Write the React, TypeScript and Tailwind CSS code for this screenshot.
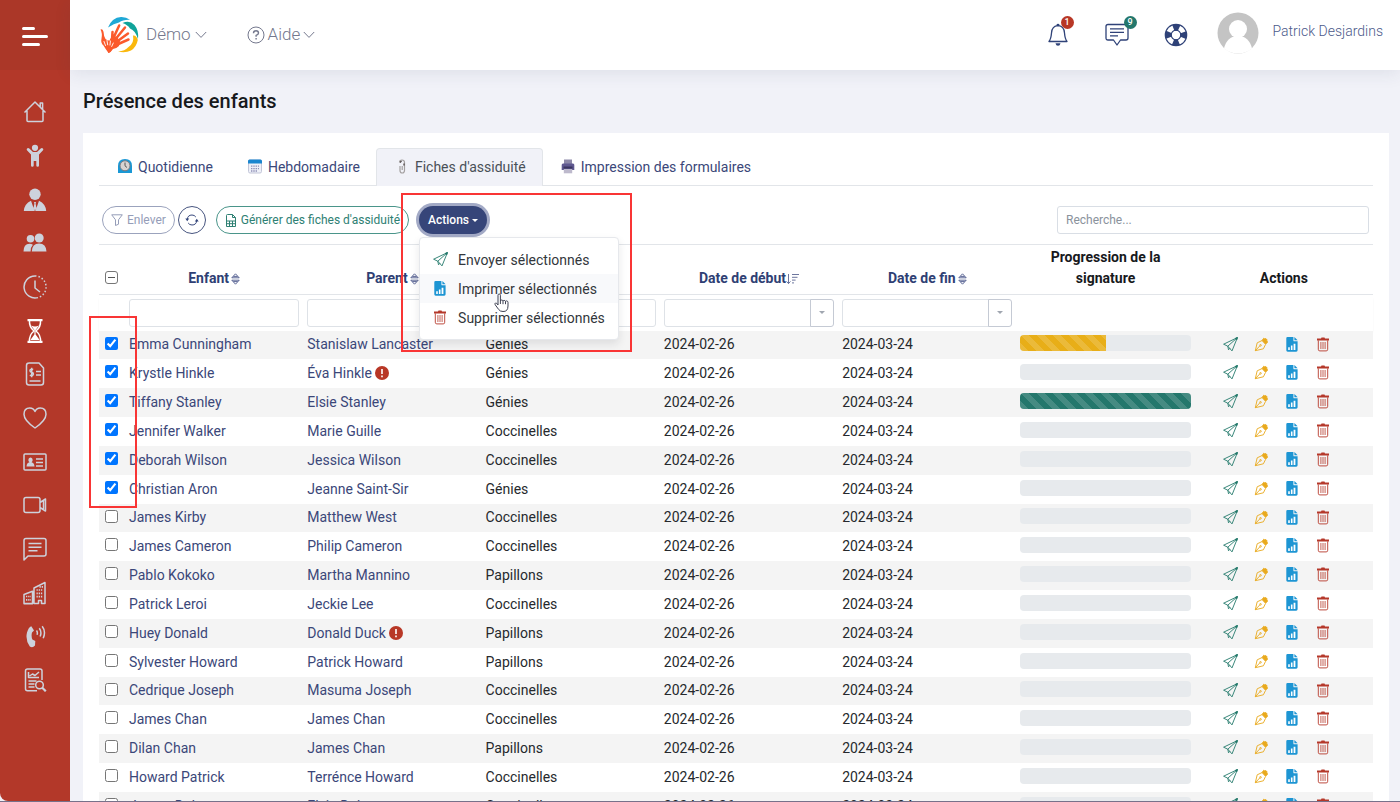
import React, { useState } from "react";

type Row = {
  child: string;
  parent: string;
  alert?: boolean;
  group: string;
  progress: number;
};

const ROWS: Row[] = [
  { child: "Emma Cunningham", parent: "Stanislaw Lancaster", group: "Génies", progress: 50 },
  { child: "Krystle Hinkle", parent: "Éva Hinkle", alert: true, group: "Génies", progress: 0 },
  { child: "Tiffany Stanley", parent: "Elsie Stanley", group: "Génies", progress: 100 },
  { child: "Jennifer Walker", parent: "Marie Guille", group: "Coccinelles", progress: 0 },
  { child: "Deborah Wilson", parent: "Jessica Wilson", group: "Coccinelles", progress: 0 },
  { child: "Christian Aron", parent: "Jeanne Saint-Sir", group: "Génies", progress: 0 },
  { child: "James Kirby", parent: "Matthew West", group: "Coccinelles", progress: 0 },
  { child: "James Cameron", parent: "Philip Cameron", group: "Coccinelles", progress: 0 },
  { child: "Pablo Kokoko", parent: "Martha Mannino", group: "Papillons", progress: 0 },
  { child: "Patrick Leroi", parent: "Jeckie Lee", group: "Coccinelles", progress: 0 },
  { child: "Huey Donald", parent: "Donald Duck", alert: true, group: "Papillons", progress: 0 },
  { child: "Sylvester Howard", parent: "Patrick Howard", group: "Papillons", progress: 0 },
  { child: "Cedrique Joseph", parent: "Masuma Joseph", group: "Coccinelles", progress: 0 },
  { child: "James Chan", parent: "James Chan", group: "Coccinelles", progress: 0 },
  { child: "Dilan Chan", parent: "James Chan", group: "Papillons", progress: 0 },
  { child: "Howard Patrick", parent: "Terrénce Howard", group: "Coccinelles", progress: 0 },
  { child: "James Dube", parent: "Elsie Dube", group: "Coccinelles", progress: 0 },
];

/* ---------- table icons ---------- */

function SendIcon() {
  return (
    <svg viewBox="0 0 15 15" className="h-[15px] w-[15px] text-[#257a6c]" fill="none" stroke="currentColor" strokeWidth="0.9" strokeLinejoin="round">
      <path d="M14.400.6.6 7.200l4.200 2L9 13.900z" />
      <path d="M14.400.6 4.800 9.200l.7 3.600 1.600-1.600" />
      <path d="m12.400 1.200 2-.6-.6 2.200z" fill="currentColor" />
    </svg>
  );
}

function PenIcon() {
  return (
    <svg viewBox="0 0 15 15" className="h-[15px] w-[15px] text-[#e9a91c]" fill="none" stroke="currentColor" strokeWidth="0.9" strokeLinejoin="round">
      <path d="M1.300 13.700 3.200 5.800 8 3.600l3.600 3.700-2.200 4.500z" />
      <path d="m1.300 13.700 4.500-4.800" />
      <circle cx="6.500" cy="8.300" r="0.800" />
      <path d="m8.200 3.200 1.600-2 1.100.900.8-.7 1.600 1.700-.7.700 1.100 1.200-1.900 2z" fill="currentColor" />
    </svg>
  );
}

function ReportIcon() {
  return (
    <svg viewBox="0 0 12 15" className="h-[15px] w-3">
      <path d="M1.500 0H7.400v3.400q0 .900.900.900H11.600v9q0 1.400-1.400 1.400H1.700Q.3 14.700.3 13.300V1.200Q.3 0 1.500 0z" fill="#1d95d3" />
      <path d="M8.400 0 11.600 3.300H8.900q-.5 0-.5-.5z" fill="#1d95d3" />
      <path d="M2.200 12.900v-2.600h1.600v2.600zM4.900 12.900V8.600h1.600v4.300zM7.600 12.900V6.800h1.800v6.100z" fill="#fff" />
    </svg>
  );
}

function TrashIcon() {
  return (
    <svg viewBox="0 0 12 15" className="h-[15px] w-3 text-[#b5382a]" fill="none" stroke="currentColor">
      <path d="M0 1.400h4L4.500.4h3l.5 1h4v2H0z" fill="currentColor" stroke="none" />
      <path d="M1.300 3.400v8.900q0 1.600 1.500 1.600h6.400q1.500 0 1.500-1.600V3.400" strokeWidth="0.9" />
      <path d="M3.900 5v7M6 5v7M8.100 5v7" strokeWidth="0.8" />
    </svg>
  );
}

function SortIcon() {
  return (
    <svg viewBox="0 0 9 12" className="ml-0.5 inline h-3 w-[9px] align-[-2px] text-[#4a568a]" fill="none" stroke="currentColor" strokeWidth="0.9">
      <path d="M4.500.8 8.200 4.800H.8zM4.500 11.200 8.200 7.200H.8zM2.400 3.400h4.200M2.400 8.600h4.200" />
    </svg>
  );
}

function SortedIcon() {
  return (
    <svg viewBox="0 0 13 12" className="inline h-3 w-[13px] align-[-2px] text-[#5c6793]" fill="none" stroke="currentColor">
      <path d="M2.500 1v9.500M.5 8.400l2 2.200 2-2.200M6 1.500h7M6 4.300h5.500M6 7.100h3.600M6 9.900h2" strokeWidth="0.9" />
    </svg>
  );
}

function ChevronIcon() {
  return (
    <svg viewBox="0 0 12 8" className="h-2 w-3" fill="none" stroke="currentColor">
      <path d="M.8 1 6 6.400 11.200 1" />
    </svg>
  );
}

function Caret() {
  return <span className="inline-block border-x-[3px] border-t-[3px] border-x-transparent border-t-current" />;
}

/* ---------- sidebar ---------- */

const MENU: { name: string; active?: boolean; icon: React.ReactNode }[] = [
  {
    name: "Accueil",
    icon: <path d="M1.500 12.500 12 2l10.500 10.500M4 10.800V20.500q0 1 1 1h14q1 0 1-1V10.800M17.200 6.800V3h2.400v6.200" />,
  },
  {
    name: "Enfants",
    icon: (
      <g fill="currentColor" stroke="none">
        <circle cx="12" cy="3.800" r="3.100" />
        <path d="M3.900 4.800Q5 3.400 6.300 4.600L10 8h4l3.700-3.400Q19 3.400 20.100 4.800 20.700 5.800 19.800 6.600L16 10.400v11.200q0 1.200-1.300 1.200-1.400 0-1.400-1.200V17h-2.600v4.600q0 1.200-1.400 1.200Q8 22.800 8 21.600V10.400L4.200 6.600Q3.300 5.800 3.900 4.800z" />
      </g>
    ),
  },
  {
    name: "Parents",
    icon: (
      <g fill="currentColor" stroke="none">
        <circle cx="12" cy="6.300" r="5.700" />
        <path d="M.8 23Q1.300 16 8 12.800l3.600 10.200zM23.200 23Q22.700 16 16 12.800L12.400 23zM11 14h2l-.4 1.800.9 4.200L12 23l-1.500-3 .9-4.200z" />
      </g>
    ),
  },
  {
    name: "Groupes",
    icon: (
      <g fill="currentColor" stroke="none">
        <circle cx="7.500" cy="7.800" r="3.800" />
        <circle cx="16.200" cy="7" r="4.500" />
        <path d="M.5 20.500q0-7.500 6-7.800 2 0 3.400 1-2.300 2.300-2.300 6.800zM8.800 20.500q.3-7.800 7.300-8 7 .2 7.400 8z" />
      </g>
    ),
  },
  {
    name: "Horaires",
    icon: (
      <g>
        <path d="M12 1A11 11 0 1 0 15 22.600M12 5.500V13l5 4" />
        <path d="M12 1A11 11 0 0 1 15 22.600" strokeDasharray="1.500 2" />
      </g>
    ),
  },
  {
    name: "Présence",
    active: true,
    icon: (
      <g>
        <path d="M4.500 1.200H19.500M4.500 22.800H19.500" strokeWidth="2.200" />
        <path d="M6.500 1.200Q6 8 11 12 6 16 6.500 22.800M17.500 1.200Q18 8 13 12 18 16 17.500 22.800" />
        <path d="M8 6.500Q12 8.500 16 6.500L12.600 11v4.500l4 5.500H7.400l4-5.500V11z" fill="currentColor" stroke="none" />
      </g>
    ),
  },
  {
    name: "Facturation",
    icon: (
      <g>
        <path d="M5.500 1H16l4.500 5v14.500q0 2.500-2.500 2.500H6q-2.500 0-2.500-2.500V3.500Q3.500 1 6 1M13 9.500h5M13 13h5M6.500 19h11" />
        <path d="M10.200 7.500Q6.800 6.500 7 8.800 7.200 10 8.800 10.200 10.600 10.600 10.400 12.200 10 14.300 6.800 13.200M8.700 5.800v9.400" />
      </g>
    ),
  },
  {
    name: "Santé",
    icon: <path d="M12 22Q1 14.500 1 8.300 1 2 6.800 2 10.500 2 12 5.500 13.500 2 17.200 2 23 2 23 8.300 23 14.500 12 22z" />,
  },
  {
    name: "Employés",
    icon: (
      <g>
        <rect x="1" y="4" width="22" height="16" rx="1" />
        <path d="M13 9h7M13 12.500h7M13 16h7" />
        <path d="M3.500 16.500q.3-4 3-4.300-1.600-1-1-3.200.5-1.600 2-1.600t2 1.600q.6 2.200-1 3.200 2.700.3 3 4.300z" fill="currentColor" stroke="none" />
      </g>
    ),
  },
  {
    name: "Vidéos",
    icon: <path d="M3 4.500h12q2 0 2 2v11q0 2-2 2H3q-2 0-2-2v-11q0-2 2-2zM17 9.500l5.500-3.500v12L17 14.500M20.500 7.300v9.400" />,
  },
  {
    name: "Messages",
    icon: <path d="M1 23V3.500Q1 1.500 3 1.500H21q2 0 2 2V17q0 2-2 2H5zM5.500 6.500h13M5.500 10.200h13M5.500 13.800h9" />,
  },
  {
    name: "Installations",
    icon: (
      <g>
        <path d="M1 22.500V13.500L9.500 10.200V22.500zM11 22.500V7L22 1.500V22.500H18.500V19.500H15.500V22.500zM.5 22.700H10" />
        <path d="M3 15.500h5M3 18.800h5M13.500 9h6.500M13.500 12.300h6.500M13.500 15.600h6.500M20 5.800h-4" strokeWidth="1.700" strokeDasharray="1.300 0.900" />
      </g>
    ),
  },
  {
    name: "Appels",
    icon: (
      <g>
        <path d="M8.300 2.200 11 6.600 9 8.600Q8 12 9.400 15.600L12.300 17 12 21.600Q9.500 24.200 6.800 22.400 2.200 16 4 8.500 5.500 3.300 8.300 2.200z" fill="currentColor" stroke="none" />
        <path d="M13.500 6.500q1.500 2 .5 4.300M16.300 4.300q2.800 3.700.8 8.200M19.200 2.200q4 5.300 1 12" />
      </g>
    ),
  },
  {
    name: "Rapports",
    icon: (
      <g>
        <path d="M14 22.800H4.500Q2.500 22.800 2.500 20.800V3Q2.500 1 4.500 1H17q2 0 2 2v9" />
        <path d="M5.500 4v5.500H16M6.500 8l3-2 2.500 1.500L16 4M5.500 13h8M5.500 16h6M5.500 19h6" />
        <circle cx="16.500" cy="17" r="3.800" />
        <path d="m19.300 19.800 3.500 3.500" strokeWidth="2.200" />
      </g>
    ),
  },
];

function Sidebar() {
  return (
    <aside className="w-[70px] shrink-0 rounded-bl-lg bg-[#b33829] text-[#cdd2dc]">
      <button aria-label="Menu" className="flex h-[70px] w-full flex-col justify-center gap-[5px] bg-[#ab3728] pt-0.5 pl-[22px]">
        <span className="h-[3px] w-[13px] rounded-full bg-white" />
        <span className="h-[3px] w-[26px] rounded-full bg-white" />
        <span className="h-[3px] w-[18px] rounded-full bg-white" />
      </button>
      <nav className="pt-5">
        {MENU.map((item) => (
          <a
            key={item.name}
            href="#"
            aria-label={item.name}
            className={item.active ? "flex h-11 items-center justify-center text-white nth-[3n]:h-[43px]" : "flex h-11 items-center justify-center nth-[3n]:h-[43px]"}
          >
            <svg viewBox="0 0 24 24" className="h-6 w-6" fill="none" stroke="currentColor" strokeWidth="1.500" strokeLinejoin="round">
              {item.icon}
            </svg>
          </a>
        ))}
      </nav>
    </aside>
  );
}

/* ---------- top bar ---------- */

function Logo() {
  return (
    <svg viewBox="0 0 40 38" className="h-[38px] w-10" strokeLinecap="round">
      <path d="M8 11.500Q12 1.500 21 1q5-.2 9 2.800Q23 3.500 19 6.500 14 7.500 8 11.500z" fill="#1fa8d6" />
      <path d="M22.500 7q7-3.200 12 2 4.500 5.500 3.500 14-2.500-8.500-8-10.500-2-3.500-7.500-5.500z" fill="#10a39a" />
      <path d="M33 19.500Q36.500 19 37.800 24 36.500 31 31 34.500 25 37.500 18 35.500 25 35 28.500 31 34.500 27 33 19.500z" fill="#fab80d" />
      <g stroke="#fb5a2c" fill="none" strokeWidth="2.500">
        <path d="M12 25 19.200 9.500M14 25 25 11.500M15 27 28 17.500M16 29 28.500 23.500M12 24 12.500 16" />
      </g>
      <path d="M10 23q3-4 7-2l3 4-1 5q-3 3-6 3-2 3.500-5 4z" fill="#fb5a2c" />
      <path d="M.5 13.500q2-1 3 2.200.3 4.800 2 7.300 2.500 2 4.500 1.500l2.500 7.500Q11 36.500 8.500 37 5.500 33 3.500 29.500.5 27 1.500 22.500 2.500 17 .5 13.500z" fill="#fb5a2c" />
      <path d="M5.500 29.500 4 25.500M7.700 28.800 7 24.500M10 29l.4-4M11.700 30.500l1.600-3.500" stroke="#fff" strokeWidth="0.900" />
    </svg>
  );
}

function TopBar() {
  return (
    <header className="relative z-10 flex h-[70px] shrink-0 items-center bg-white pr-[17px] pl-[30px] shadow-[0_4px_16px_rgba(40,50,90,0.09)]">
      <Logo />
      <button className="ml-1.5 flex items-center gap-1 text-[17px] font-light text-[#74788d]">
        Démo <ChevronIcon />
      </button>
      <button className="ml-10 flex items-center gap-[3px] text-[17px] font-light text-[#74788d]">
        <svg viewBox="0 0 18 18" className="h-[18px] w-[18px]" fill="none" stroke="currentColor">
          <circle cx="9" cy="9" r="8" />
          <path d="M6.500 7.200Q6.500 4.700 9 4.700t2.500 2.200Q11.500 8.300 9.100 9.400V10.800M9.100 12v1.500" strokeWidth="1.400" />
        </svg>
        Aide <ChevronIcon />
      </button>

      <div className="ml-auto flex items-center text-[#2f4278]">
        <button aria-label="Notifications" className="relative mr-[37px]">
          <svg viewBox="0 0 20 24" className="h-6 w-5" fill="none" stroke="currentColor" strokeWidth="1.300" strokeLinejoin="round">
            <path d="M1 18.500Q3 16 3.500 10 4 3 10 2.700 16 3 16.500 10 17 16 19 18.500zM8.700 2.500Q10 .5 11.300 2.500" />
            <path d="M7.500 20.300h5q-.5 2.500-2.500 2.500t-2.500-2.500z" fill="currentColor" stroke="none" />
          </svg>
          <span className="absolute -top-[7px] -right-1.5 h-[13px] w-[13px] rounded-full bg-[#b83726] text-center text-[9px] leading-[13px] font-medium text-white">1</span>
        </button>
        <button aria-label="Messages" className="relative mr-[35px]">
          <svg viewBox="0 0 24 24" className="h-6 w-6" fill="none" stroke="currentColor" strokeWidth="1.300" strokeLinejoin="round">
            <path d="M3 1.500H21q2 0 2 2v11.500q0 2-2 2h-5.500L12 22l-3.500-5H3q-2 0-2-2V3.500q0-2 2-2zM5 5.800h14M5 9.300h14M5 12.800h8" />
          </svg>
          <span className="absolute -top-[7px] -right-2 h-[13px] w-[13px] rounded-full bg-[#24776c] text-center text-[9px] leading-[13px] font-medium text-white">9</span>
        </button>
        <button aria-label="Support" className="mr-[29px]">
          <svg viewBox="0 0 24 24" className="h-6 w-6" fill="none">
            <circle cx="12" cy="12" r="7.500" stroke="currentColor" strokeWidth="6.500" strokeDasharray="5.800 5.981" strokeDashoffset="2.900" />
            <circle cx="12" cy="12" r="10.700" stroke="currentColor" strokeWidth="1.200" />
            <circle cx="12" cy="12" r="4.800" stroke="currentColor" strokeWidth="1.200" />
          </svg>
        </button>
        <button className="flex items-center gap-3.5 pb-1 text-sm font-light text-[#4c5a8a]">
          <svg viewBox="0 0 42 42" className="h-[42px] w-[42px]">
            <circle cx="21" cy="21" r="20.500" fill="#c4c4c4" />
            <circle cx="21" cy="17" r="9" fill="#fff" />
            <path d="M7 36.500Q10 24 21 24t14 12.500Q29 41.500 21 41.500T7 36.500z" fill="#fff" />
          </svg>
          <span className="pb-1">Patrick Desjardins</span>
        </button>
      </div>
    </header>
  );
}

/* ---------- tabs and toolbar ---------- */

function Tabs() {
  return (
    <div role="tablist" className="flex h-[38px] border-b border-[#e2e5e9] text-sm text-[#3b4779]">
      <button role="tab" className="flex items-center gap-1.5 pr-[18px] pl-[19px]">
        <svg viewBox="0 0 14 15" className="h-[15px] w-3.5">
          <path d="M0 14V7q0-7 7-7t7 7v7z" fill="#1a98d5" />
          <circle cx="7" cy="6.800" r="5" fill="#d8d4d2" stroke="#7d7a80" />
          <path d="M7 3.500v3.300l2 1.700" stroke="#555" fill="none" />
        </svg>
        Quotidienne
      </button>
      <button role="tab" className="flex items-center gap-1.5 pr-4 pl-[17px]">
        <svg viewBox="0 0 14 15" className="h-[15px] w-3.5">
          <rect x="0.500" y="1" width="13" height="13" rx="1.500" fill="#eef0f8" stroke="#c3c6d8" />
          <path d="M0 4.500V2q0-1.500 1.500-1.500h11Q14 .5 14 2v2.500z" fill="#1a86cf" />
          <path d="M3 7.200h8M3 9.700h8M3 12h6" stroke="#8e8fb5" strokeWidth="1.300" strokeDasharray="1.400 0.900" />
        </svg>
        Hebdomadaire
      </button>
      <button role="tab" aria-selected="true" className="-mb-px flex items-center gap-1.5 rounded-t border border-b-0 border-[#e2e5e9] bg-[#f1f2f8] pr-4 pb-0.5 pl-[18px] text-[#495057]">
        <svg viewBox="0 0 14 15" className="h-[15px] w-3.5" fill="none" stroke="#a3a0a0" strokeWidth="1.200">
          <path d="M5 7v4.500Q5 14 7.200 14T9.500 11.500V3.500Q9.500 1 7 1T4.500 3.500M7.200 7v4" />
          <path d="M5 3.500 6.500 2M9 4.500v2" stroke="#4c4444" />
        </svg>
        Fiches d'assiduité
      </button>
      <button role="tab" className="flex items-center gap-1.5 px-[18px]">
        <svg viewBox="0 0 14 15" className="h-[15px] w-3.5">
          <path d="M3 .5h8V5H3z" fill="#8d88a8" />
          <path d="M2 4.500h10q1.300 0 1.300 1.500v5H.7V6q0-1.500 1.300-1.500z" fill="#5f5890" />
          <path d="M2.500 7.500h9v2h-9z" fill="#3a3560" />
          <path d="M2.800 10h8.400v4.300H2.800z" fill="#bdb9cc" />
        </svg>
        Impression des formulaires
      </button>
    </div>
  );
}

function ActionsMenu() {
  return (
    <ul className="absolute top-[31px] left-0 z-20 w-[200px] rounded border border-[#e6e8ec] bg-white py-[7px] text-sm text-[#33373c] shadow-[0_4px_8px_rgba(30,32,37,0.1)]">
      <li>
        <button className="flex h-[29px] w-full items-center gap-2.5 pl-3">
          <span className="flex w-4 justify-center"><SendIcon /></span>Envoyer sélectionnés
        </button>
      </li>
      <li>
        <button className="flex h-[29px] w-full items-center gap-2.5 bg-[#f8f9fb] pl-3">
          <span className="flex w-4 justify-center"><ReportIcon /></span>Imprimer sélectionnés
        </button>
      </li>
      <li>
        <button className="flex h-[29px] w-full items-center gap-2.5 pl-3">
          <span className="flex w-4 justify-center"><TrashIcon /></span>Supprimer sélectionnés
        </button>
      </li>
      <svg viewBox="0 0 15 20" className="absolute top-[55px] left-[74px] h-5 w-[15px]" fill="#fff" stroke="#3f4254" strokeLinejoin="round">
        <path d="M4 12V2.200Q4 1 5.200 1T6.400 2.200V8q.2-1 1.300-1T9 8.200q.2-.8 1.200-.8t1.300 1.100q.2-.6 1.100-.6Q14 8 14 9.500V13q0 3-1.500 4.500-1 1-3.500 1-3 0-4.300-2L1.200 11.800Q.5 10.500 1.500 10 2.600 9.600 4 12zM6.400 8v3M9 8.200v3M11.500 8.500v2.700" />
      </svg>
    </ul>
  );
}

function Toolbar() {
  return (
    <div className="flex items-center border-b border-[#e2e5e9] pt-5 pr-1 pb-2.5 pl-[3px] text-xs">
      <button className="flex h-7 items-center gap-1 rounded-full border border-[#9ba3bd] px-2 text-[#959db8]">
        <svg viewBox="0 0 12 12" className="h-3 w-3" fill="none" stroke="currentColor" strokeLinejoin="round">
          <path d="M.7.8H11.300L7.500 5.800v4.400L4.500 11.500V5.800z" />
        </svg>
        Enlever
      </button>
      <button aria-label="Rafraîchir" className="ml-[3px] flex h-7 w-7 items-center justify-center rounded-full border border-[#47557f] text-[#35467b]">
        <svg viewBox="0 0 14 12" className="h-3 w-3.5" fill="none" stroke="currentColor">
          <path d="M2.200 5.500Q2.700 1 7 1q2.500 0 3.800 2M11.800 6.500Q11.300 11 7 11 4.500 11 3.200 9" />
          <path d="m.3 4.600 1.900 2.600 2-2.600zM9.800 7.400l2-2.600 1.900 2.600z" fill="currentColor" stroke="none" />
        </svg>
      </button>
      <button className="ml-2.5 flex h-7 items-center gap-1 rounded-full border border-[#4a958a] px-2 text-[#2e8073]">
        <svg viewBox="0 0 12 13" className="h-[13px] w-3" fill="none" stroke="currentColor">
          <path d="M1.500 12.500V1.500q0-1 1-1H7.500L10.500 3.500v9zM7.500.5v3h3M1.500 7h9M1.500 9.700h9M4.500 7v5.500M7.500 7v5.500" />
        </svg>
        Générer des fiches d'assiduité
      </button>
      <div className="relative ml-2.5">
        <button className="flex h-7 items-center gap-[3px] rounded-full bg-[#364579] px-[9px] font-medium text-white shadow-[0_0_0_3px_#a3aac6]">
          Actions <Caret />
        </button>
        <ActionsMenu />
      </div>
      <input
        type="search"
        aria-label="Recherche"
        placeholder="Recherche..."
        className="ml-auto h-7 w-[312px] rounded-[3px] border border-[#d9dee5] px-2 placeholder:text-[#8a929c]"
      />
    </div>
  );
}

/* ---------- table ---------- */

function ProgressBar({ value }: { value: number }) {
  const color = value === 100 ? "bg-[#24776c]" : "bg-[#e8ae18]";
  return (
    <div className="h-4 overflow-hidden rounded bg-[#e7eaed]">
      <div
        className={`h-full bg-[linear-gradient(45deg,rgba(255,255,255,0.15)_25%,transparent_25%,transparent_50%,rgba(255,255,255,0.15)_50%,rgba(255,255,255,0.15)_75%,transparent_75%,transparent)] bg-[length:16px_16px] ${color}`}
        style={{ width: `${value}%` }}
      />
    </div>
  );
}

function DateFilter({ label }: { label: string }) {
  return (
    <div className="flex">
      <input aria-label={label} className="h-7 w-full min-w-0 rounded-l-[3px] border border-[#dee2e7]" />
      <button aria-label={`Choisir ${label}`} className="-ml-px flex h-7 w-6 shrink-0 items-center justify-center rounded-r-[3px] border border-[#c5cad4] text-[#a0a6b0]">
        <Caret />
      </button>
    </div>
  );
}

function AttendanceTable() {
  const [selected, setSelected] = useState<number[]>([0, 1, 2, 3, 4, 5]);

  const toggle = (index: number) => {
    setSelected((prev) => (prev.includes(index) ? prev.filter((i) => i !== index) : [...prev, index]));
  };

  return (
    <table className="w-full table-fixed border-collapse text-sm text-[#26292d]">
      <colgroup>
        <col className="w-[26px]" />
        <col span={7} />
      </colgroup>
      <thead>
        <tr className="h-[49px] border-b border-[#e2e5e9] align-bottom leading-[21px] text-[#2f3f74]">
          <th className="pb-2.5 pl-1.5 text-left">
            <input
              type="checkbox"
              aria-label="Tout sélectionner"
              className="relative block h-[13px] w-[13px] appearance-none rounded-[3px] border border-[#767676] bg-white before:absolute before:inset-x-[2px] before:top-[5px] before:h-px before:bg-[#555]"
            />
          </th>
          <th className="px-1 pb-[5px] font-bold">Enfant<SortIcon /></th>
          <th className="px-1 pb-[5px] font-bold">Parent<SortIcon /></th>
          <th aria-label="Groupe" />
          <th className="px-1 pb-[5px] font-bold">Date de début<SortedIcon /></th>
          <th className="px-1 pb-[5px] font-bold">Date de fin<SortIcon /></th>
          <th className="px-7 pb-[5px] font-bold text-[#17191c]">Progression de la signature</th>
          <th className="px-1 pb-[5px] font-bold text-[#17191c]">Actions</th>
        </tr>
        <tr className="h-[37px] shadow-[0_3px_3px_-2px_rgba(0,0,0,0.25)]">
          <td />
          <td className="px-1"><input aria-label="Filtrer par enfant" className="block h-7 w-full rounded-[3px] border border-[#dee2e7]" /></td>
          <td className="px-1"><input aria-label="Filtrer par parent" className="block h-7 w-full rounded-[3px] border border-[#dee2e7]" /></td>
          <td className="px-1"><input aria-label="Filtrer par groupe" className="block h-7 w-full rounded-[3px] border border-[#dee2e7]" /></td>
          <td className="px-1"><DateFilter label="date de début" /></td>
          <td className="px-1"><DateFilter label="date de fin" /></td>
          <td />
          <td />
        </tr>
      </thead>
      <tbody>
        {ROWS.map((row, index) => (
          <tr key={index} className="h-[29px] odd:bg-[#f4f4f4] nth-[6n+1]:h-[28px]">
            <td className="pb-1 pl-1.5">
              <input
                type="checkbox"
                aria-label={row.child}
                checked={selected.includes(index)}
                onChange={() => toggle(index)}
                className="block h-[13px] w-[13px] accent-[#0075ff]"
              />
            </td>
            <td className="px-1 pb-0.5"><a href="#" className="text-[#3b4779]">{row.child}</a></td>
            <td className="px-1 pb-0.5">
              <a href="#" className="text-[#3b4779]">{row.parent}</a>
              {row.alert && (
                <svg viewBox="0 0 14 14" className="ml-[3px] inline h-3.5 w-3.5 align-[-2px]">
                  <circle cx="7" cy="7" r="7" fill="#b83726" />
                  <path d="M7 3v5M7 9.500v1.700" stroke="#fff" strokeWidth="1.600" />
                </svg>
              )}
            </td>
            <td className="px-1 pb-0.5">{row.group}</td>
            <td className="px-1 pb-0.5">2024-02-26</td>
            <td className="px-1 pb-0.5">2024-03-24</td>
            <td className="px-1 pb-1"><ProgressBar value={row.progress} /></td>
            <td className="pb-0.5 pl-7">
              <div className="flex items-center gap-4">
                <button aria-label="Envoyer" className="flex w-[15px] justify-center"><SendIcon /></button>
                <button aria-label="Signer" className="flex w-[15px] justify-center"><PenIcon /></button>
                <button aria-label="Imprimer" className="flex w-[15px] justify-center"><ReportIcon /></button>
                <button aria-label="Supprimer" className="flex w-[15px] justify-center"><TrashIcon /></button>
              </div>
            </td>
          </tr>
        ))}
      </tbody>
    </table>
  );
}

export default function App() {
  return (
    <div className="relative flex h-screen overflow-hidden border-b border-[#77718a] bg-[#f1f2f8] font-[Roboto,sans-serif]">
      <Sidebar />
      <div className="flex min-w-0 flex-1 flex-col">
        <TopBar />
        <main className="flex min-h-0 flex-1 flex-col pr-[11px] pl-[13px]">
          <h1 className="pt-[17px] pb-[18px] text-xl leading-7 font-medium text-[#17191c]">Présence des enfants</h1>
          <section className="min-h-0 flex-1 overflow-hidden bg-white px-4 pt-[15px]">
            <Tabs />
            <Toolbar />
            <AttendanceTable />
          </section>
        </main>
      </div>
      {/* highlighted areas */}
      <div className="pointer-events-none absolute top-[193px] left-[401px] z-30 h-[159px] w-[231px] border-2 border-[#f93535]" />
      <div className="pointer-events-none absolute top-[316px] left-[89px] z-30 h-48 w-12 border-2 border-[#f93535]" />
    </div>
  );
}
